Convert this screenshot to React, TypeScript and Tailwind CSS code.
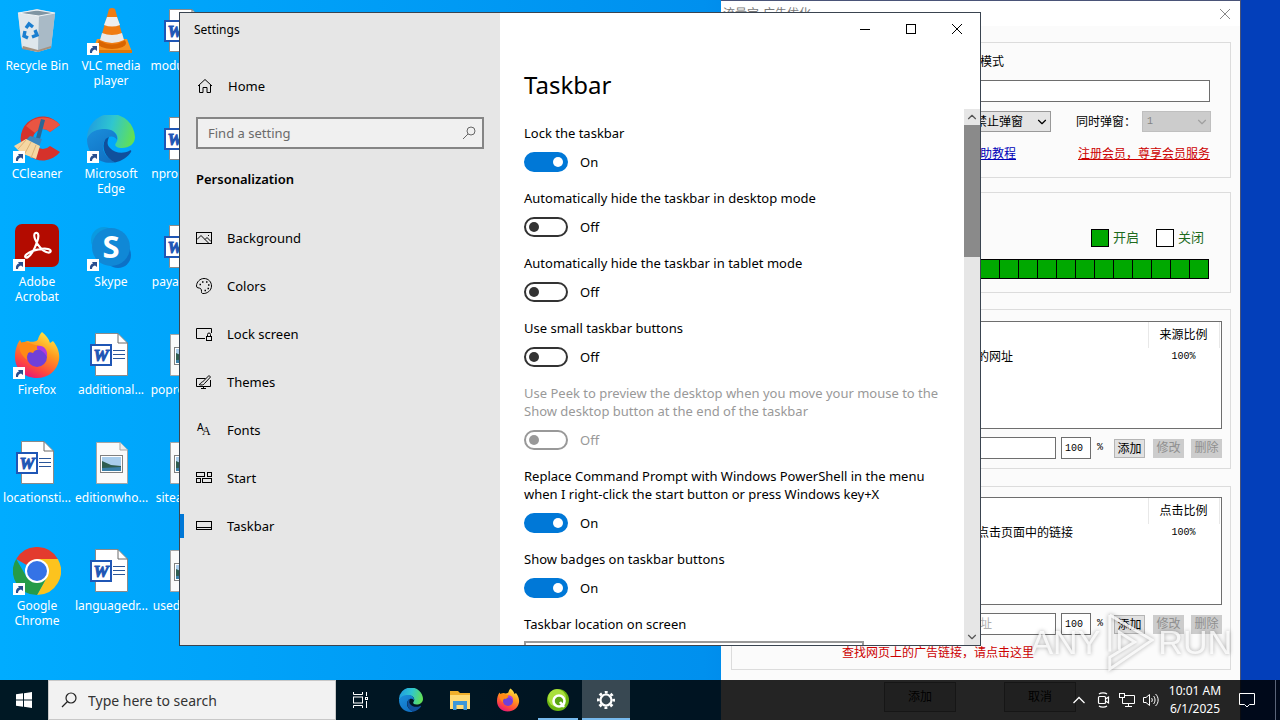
import React, { useState } from 'react';
import { ChevronDown, ChevronUp } from 'lucide-react';

/* ---------- Desktop icons ---------- */

function RecycleBinIcon() {
    return (
        <svg viewBox="0 0 48 48" className="size-12">
            <path d="M5 6 L24 2 L42 6 L38 41 L24 45 L9 41Z" fill="#c9d6df" />
            <path d="M5 6 L26 9 L25 45 L9 41Z" fill="#e3eaef" opacity=".85" />
            <path d="M26 9 L42 6 L38 41 L25 45Z" fill="#a9bac6" />
            <path d="M5 6 L24 3 L42 6 L26 9Z" fill="#7f95a3" stroke="#eef3f6" strokeWidth="1.2" />
            <path d="M10 39 L25 43 L38 39 L38 41 L25 45 L9 42Z" fill="#a4917f" />
            <g fill="none" stroke="#1b7fd0" strokeWidth="3.4">
                <path d="M13 21 L16 17 L20 20" />
                <path d="M22 23 L24 28 L19 30" />
                <path d="M15 31 L11 29 L12 24" />
            </g>
        </svg>
    );
}

function VlcIcon() {
    return (
        <svg viewBox="0 0 48 48" className="size-12">
            <path d="M10 32 L40 32 L45 45 L5 45Z" fill="#f79421" />
            <path d="M5 43 L45 43 L45 46 L5 46Z" fill="#e07708" />
            <ellipse cx="25" cy="36" rx="14" ry="6" fill="#d96500" />
            <path d="M22 2 Q25 0 28 2 L37 34 Q25 41 13 34Z" fill="#f07c12" />
            <path d="M20 10 L30 10 L33 18 Q25 21 17 18Z" fill="#eeeeee" />
            <path d="M15 26 Q25 30 35 26 L37 33 Q25 39 13 33Z" fill="#e9e9e9" />
        </svg>
    );
}

function CCleanerIcon() {
    return (
        <svg viewBox="0 0 48 48" className="size-12">
            <path d="M47 10 A22 22 0 1 0 47 37 L37 31 A10 10 0 1 1 37 17Z" fill="#d5322b" />
            <path d="M47 10 A22 22 0 0 0 13 11 L22 18 A10 10 0 0 1 37 17Z" fill="#ea5542" />
            <path d="M28 4 L32 5 L27 24 L23 23Z" fill="#2c6795" />
            <path d="M17 21 L29 24 L26 32 L13 25Z" fill="#3c86be" />
            <path d="M13 24 L27 31 L23 44 L8 38 L1 31Z" fill="#f5d7a2" />
            <path d="M13 25 L5 34 M18 27 L11 40 M23 30 L18 43" stroke="#dcb377" strokeWidth="1" />
        </svg>
    );
}

function EdgeIcon({ className = 'size-12' }: { className?: string }) {
    return (
        <svg viewBox="0 0 48 48" className={className}>
            <defs>
                <linearGradient id="edgeTop" x1="0" y1=".3" x2="1" y2=".5">
                    <stop offset="0" stopColor="#1f9be0" />
                    <stop offset=".5" stopColor="#2fc6d0" />
                    <stop offset="1" stopColor="#62e054" />
                </linearGradient>
                <linearGradient id="edgeBody" x1="0" y1="0" x2=".6" y2="1">
                    <stop offset="0" stopColor="#1b8fdc" />
                    <stop offset="1" stopColor="#1172c4" />
                </linearGradient>
            </defs>
            <path d="M0 24 A24 24 0 0 1 48 22 C48 29 42 33 35 33 C29 33 27 30 29 28 C33 22 29 15 20 15 C10 15 3 20 0 24Z" fill="url(#edgeTop)" />
            <path d="M0 24 C3 16 11 14 18 14 C26 14 31 19 30 25 C28 21 22 20 18 25 C13 32 17 42 28 47.500 C12 50 0 39 0 24Z" fill="url(#edgeBody)" />
            <path d="M18 25 C14 32 18 43 28 47.500 C35 46 41 42 44 37 C45 35 43 35 42 36 C36 39 27 38 23 33 C20 30 20 27 22 22 C20 23 19 23 18 25Z" fill="#10509c" />
        </svg>
    );
}

function AcrobatIcon() {
    return (
        <svg viewBox="0 0 48 48" className="size-12">
            <rect x="2" y="1" width="44" height="43" rx="7" fill="#b30b00" />
            <path d="M22.500 10 C26 9 26 14 24 19 C22 25 18 32 15 34 C12 36 11 33 14 31 C19 27 30 25 35 26 C39 27 38 30 35 29.500 C30 29 24 22 22 16 C21 13 21 10.500 22.500 10Z" fill="none" stroke="#fff" strokeWidth="2.200" />
        </svg>
    );
}

function SkypeIcon() {
    return (
        <svg viewBox="0 0 48 48" className="size-12">
            <circle cx="17" cy="17" r="13" fill="#0a9ae0" />
            <circle cx="31" cy="32" r="13" fill="#0c71c6" />
            <circle cx="24" cy="24" r="19" fill="#1088d6" />
            <text x="24" y="35" textAnchor="middle" fontSize="31" fontWeight="700" fontFamily="Open Sans, sans-serif" fill="#fff">S</text>
        </svg>
    );
}

function FirefoxIcon({ className = 'size-12' }: { className?: string }) {
    return (
        <svg viewBox="0 0 48 48" className={className}>
            <defs>
                <linearGradient id="foxBody" x1=".8" y1="0" x2=".3" y2="1">
                    <stop offset="0" stopColor="#fff04a" />
                    <stop offset=".4" stopColor="#ff9a1f" />
                    <stop offset=".75" stopColor="#ff4a3c" />
                    <stop offset="1" stopColor="#e6157a" />
                </linearGradient>
            </defs>
            <path d="M29 1 C33 4 36 8 37 12 L40 10 C45 16 47 23 46 29 C44 40 35 47 24 47 C11 47 2 38 2 26 C2 19 4 13 7 9 L9 13 C11 11 13 10 15 10 C20 12 25 10 25 8 C26 5 27 3 29 1Z" fill="url(#foxBody)" />
            <circle cx="24" cy="26" r="10" fill="#7040d8" />
            <path d="M7 12 C13 9 18 13 22 14 C26 14 28 16 28 17 C26 19 22 18 20 22 C16 20 13 22 14 29 C8 24 5 18 7 12Z" fill="#ff8a16" />
            <path d="M24 15 C31 14 35 19 34 26 C32 22 29 19 24 18Z" fill="#b03adf" />
        </svg>
    );
}

function ChromeIcon() {
    return (
        <svg viewBox="0 0 48 48" className="size-12">
            <path d="M24 24 L3.200 12 A24 24 0 0 1 44.800 12Z" fill="#e33b2e" />
            <path d="M24 12 L44.800 12 A24 24 0 0 1 24 48 L34 30Z" fill="#fcc31e" />
            <path d="M3.200 12 L13.600 30 L34 30 L24 48 A24 24 0 0 1 3.200 12Z" fill="#259b48" />
            <circle cx="24" cy="24" r="12" fill="#fff" />
            <circle cx="24" cy="24" r="10" fill="#3573e6" />
        </svg>
    );
}

function WordFileIcon() {
    return (
        <svg viewBox="0 0 48 48" className="size-12">
            <path d="M8.500 2.500 H31 L40.500 12 V44.500 H8.500Z" fill="#fff" stroke="#8a8a8a" />
            <path d="M31 2.500 V12 H40.500" fill="none" stroke="#6b6b6b" />
            <path d="M26 19.500 H38 M26 23.500 H38 M26 27.500 H38" stroke="#2a5699" />
            <rect x="4" y="14" width="20" height="20" fill="#fff" stroke="#1f56b5" strokeWidth="2" />
            <text x="14" y="30" textAnchor="middle" fontSize="17" fontWeight="700" fontStyle="italic" fontFamily="Liberation Serif, serif" fill="#1f56b5" stroke="#1f56b5">W</text>
        </svg>
    );
}

function ImageFileIcon() {
    return (
        <svg viewBox="0 0 48 48" className="size-12">
            <path d="M9.500 3.500 H33 L40.500 11 V44.500 H9.500Z" fill="#fafafa" stroke="#a5a5a5" />
            <path d="M33 3.500 V11 H40.500" fill="#ececec" stroke="#a5a5a5" />
            <rect x="13.500" y="16.500" width="22" height="17" fill="#fff" stroke="#808080" />
            <rect x="15" y="18" width="19" height="14" fill="#a9cdec" />
            <path d="M15 22 L24 26 L34 27 V32 H15Z" fill="#2f5d50" />
            <path d="M15 29 L34 28 V32 H15Z" fill="#3a7fa8" />
        </svg>
    );
}

function ShortcutBadge() {
    return (
        <svg viewBox="0 0 12 12" className="absolute bottom-0 left-0 size-3">
            <rect width="12" height="12" fill="#fff" />
            <path d="M3 10 C2.500 6.500 4 5 6 4.500 L5 3 H10 V8 L8 6.500 C6 7 5 8 5 10Z" fill="#2a4f8f" />
        </svg>
    );
}

interface DesktopItem {
    label: string;
    icon: React.ReactNode;
    shortcut?: boolean;
}

const columns: DesktopItem[][] = [
    [
        { label: 'Recycle Bin', icon: <RecycleBinIcon /> },
        { label: 'CCleaner', icon: <CCleanerIcon />, shortcut: true },
        { label: 'Adobe Acrobat', icon: <AcrobatIcon />, shortcut: true },
        { label: 'Firefox', icon: <FirefoxIcon />, shortcut: true },
        { label: 'locationsti...', icon: <WordFileIcon /> },
        { label: 'Google Chrome', icon: <ChromeIcon />, shortcut: true },
    ],
    [
        { label: 'VLC media player', icon: <VlcIcon />, shortcut: true },
        { label: 'Microsoft Edge', icon: <EdgeIcon />, shortcut: true },
        { label: 'Skype', icon: <SkypeIcon />, shortcut: true },
        { label: 'additional...', icon: <WordFileIcon /> },
        { label: 'editionwho...', icon: <ImageFileIcon /> },
        { label: 'languagedr...', icon: <WordFileIcon /> },
    ],
    [
        { label: 'modulesin...', icon: <WordFileIcon /> },
        { label: 'npronglist...', icon: <WordFileIcon /> },
        { label: 'payaccess...', icon: <WordFileIcon /> },
        { label: 'poproduct...', icon: <ImageFileIcon /> },
        { label: 'siteaddit...', icon: <ImageFileIcon /> },
        { label: 'usedisted...', icon: <ImageFileIcon /> },
    ],
];

function DesktopIcons() {
    return (
        <div className="flex">
            {columns.map((items, c) => (
                <div key={c} className="flex w-[74px] flex-col">
                    {items.map((item) => (
                        <div key={item.label} className="flex h-[108px] flex-col items-center pt-[7px]">
                            <div className="relative">
                                {item.icon}
                                {item.shortcut && <ShortcutBadge />}
                            </div>
                            <span className="mt-[3px] w-[72px] text-center text-[12px] leading-[15px] text-white">{item.label}</span>
                        </div>
                    ))}
                </div>
            ))}
        </div>
    );
}

/* ---------- Ad window ---------- */

function SourceList({ header, row, placeholder, id }: { header: string; row: string; placeholder?: string; id: string }) {
    return (
        <>
            <div className="h-[108px] border border-[#6e6e6e] bg-white">
                <table className="w-full table-fixed border-collapse">
                    <thead>
                        <tr className="h-[26px]">
                            <th className="w-auto" />
                            <th className="w-[71px] border-x border-[#e8e8e8] font-normal">{header}</th>
                            <th className="w-[2px]" />
                        </tr>
                    </thead>
                    <tbody>
                        <tr>
                            <td className="pl-[235px]">{row}</td>
                            <td className="text-center font-['Liberation_Mono',monospace] text-[10px]">100%</td>
                            <td />
                        </tr>
                    </tbody>
                </table>
            </div>
            <div className="mt-2 flex items-center">
                <input aria-label={`${id} url`} placeholder={placeholder} className="h-[22px] min-w-0 flex-1 border border-[#6e6e6e] bg-white pl-[226px] placeholder:text-[#b0b0b0]" />
                <input aria-label={`${id} ratio`} defaultValue="100" className="ml-[5px] h-[22px] w-[30px] border border-[#6e6e6e] bg-white pl-[3px] font-['Liberation_Mono',monospace] text-[10px]" />
                <span className="ml-[6px] w-[17px] font-['Liberation_Mono',monospace] text-[10px]">%</span>
                <button className="h-[19px] w-[31px] border border-[#b5b5b5] bg-[#e1e1e1]">添加</button>
                <button disabled className="ml-2 h-[19px] w-[31px] bg-[#cccccc] text-[#8f8f8f]">修改</button>
                <button disabled className="ml-[7px] h-[19px] w-[31px] bg-[#cccccc] text-[#8f8f8f]">删除</button>
            </div>
        </>
    );
}

function AdWindow() {
    return (
        <section className="absolute top-0 left-[721px] flex h-full w-[520px] flex-col border-t border-r border-[#4a5478] bg-[#fbfbfb] font-['Liberation_Sans','Noto_Sans_CJK_SC',sans-serif] text-[12px] leading-[18px] text-black">
            <header className="flex h-[25px] shrink-0 items-center justify-between bg-white pr-[9px] pl-[2px] text-[#777777]">
                <span>流量宝-广告优化</span>
                <button aria-label="关闭窗口">
                    <svg viewBox="0 0 12 12" className="size-3" fill="none" stroke="#888888"><path d="M1 1 L11 11 M11 1 L1 11" /></svg>
                </button>
            </header>

            <div className="mr-[9px] ml-[10px] mt-4 flex h-[136px] shrink-0 flex-col border border-[#dcdcdc] pt-[10px] pr-5 pl-5">
                <div className="pl-[228px]">模式</div>
                <input aria-label="网址" className="mt-[9px] h-[22px] w-full border border-[#6e6e6e] bg-white" />
                <div className="mt-[9px] -mr-px flex items-center justify-end">
                    <span className="relative flex">
                        <select aria-label="弹窗" className="h-[21px] w-[100px] appearance-none border border-[#999999] bg-[#e4e4e4] pl-[23px]">
                            <option>禁止弹窗</option>
                        </select>
                        <ChevronDown className="pointer-events-none absolute top-1 right-[2px] size-[14px]" strokeWidth={2} />
                    </span>
                    <label htmlFor="popups" className="ml-[25px] w-[66px]">同时弹窗：</label>
                    <span className="relative flex">
                        <select id="popups" disabled className="h-[21px] w-[69px] appearance-none border border-[#bfbfbf] bg-[#cccccc] pl-1 font-['Liberation_Mono',monospace] text-[10px] text-[#838383] opacity-100">
                            <option>1</option>
                        </select>
                        <ChevronDown className="pointer-events-none absolute top-1 right-[2px] size-[14px] text-[#a0a0a0]" strokeWidth={2} />
                    </span>
                </div>
                <div className="mt-[13px] flex justify-between">
                    <a href="#help" className="pl-[216px] text-[#0000b8] underline">帮助教程</a>
                    <a href="#vip" className="text-[#cc0000] underline">注册会员，尊享会员服务</a>
                </div>
            </div>

            <div className="mr-[9px] ml-[10px] mt-[14px] flex h-[101px] shrink-0 flex-col border border-[#dcdcdc] pt-9 pr-[21px] pl-5">
                <div className="flex items-center justify-end pr-[5px] text-[13px] text-[#1e6b1e]">
                    <span className="mr-1 size-[18px] border border-black bg-[#00a800]" />
                    <span>开启</span>
                    <span className="mr-1 ml-[17px] size-[18px] border border-black bg-white" />
                    <span>关闭</span>
                </div>
                <div className="mt-3 flex h-5 justify-end border-r border-black">
                    {Array.from({ length: 24 }, (_, hour) => (
                        <span key={hour} className="w-[19px] border-y border-l border-black bg-[#00a800]" />
                    ))}
                </div>
            </div>

            <div className="mr-[9px] ml-[10px] mt-4 h-[160px] shrink-0 border border-[#dcdcdc] pr-2 pl-[9px] pt-[11px]">
                <SourceList id="source" header="来源比例" row="的网址" />
            </div>

            <div className="mr-[9px] ml-[10px] mt-[17px] h-[184px] shrink-0 border border-[#dcdcdc] pr-2 pl-[9px] pt-[10px]">
                <SourceList id="click" header="点击比例" row="点击页面中的链接" placeholder="网址" />
                <a href="#find" className="mt-[9px] block pl-[101px] text-[#cc0000]">查找网页上的广告链接，请点击这里</a>
            </div>

            <div className="mt-3 flex shrink-0 gap-12 pl-[163px]">
                <button className="h-[30px] w-[72px] border border-[#999999] bg-[#e1e1e1]">添加</button>
                <button className="h-[30px] w-[72px] border border-[#999999] bg-[#e1e1e1]">取消</button>
            </div>
        </section>
    );
}

/* ---------- Settings window ---------- */

const navItems = [
    {
        label: 'Background',
        icon: <><rect x=".5" y="2.500" width="15" height="11" /><path d="M1 9.500 L5 5.500 L12.500 13 M9 9.500 L11 7.500 L15 11.500" /><path d="M12 5.500 h1" /></>,
    },
    {
        label: 'Colors',
        icon: <><path d="M6.500 15.500 C4.500 15 6.500 12 4.500 10.500 C3 9.500 .5 10.500 .5 8 C.5 4 4 .5 8 .5 C12.500 .5 15.500 4 15.500 8 C15.500 12.500 11 16 6.500 15.500Z" /><path d="M3.500 6.500 h1.500 M6 4 h1.500 M10 4 h1.500 M12 7 h1.500 M11.500 10.500 h1.500 M8.500 12.500 h1.500" strokeWidth="1.500" /></>,
    },
    {
        label: 'Lock screen',
        icon: <><path d="M9 12.500 H.5 V2.500 H15.500 V7" /><rect x="10.500" y="10.500" width="5" height="4" /><path d="M11.500 10.500 V8.500 a1.500 1.500 0 0 1 3 0 V10.500" /></>,
    },
    {
        label: 'Themes',
        icon: <><path d="M9.500 4.500 H.5 V12.500 H14.500 V6 M5 14.500 H10 M7.500 12.500 V14.500" /><path d="M3 10.500 C5 10.500 4.500 8 6.500 8 L13 1.500 L14.500 3 L8.500 9.500 C8 11 5 11.500 3 10.500Z" /></>,
    },
    {
        label: 'Fonts',
        icon: (
            <g fill="#000" stroke="none">
                <text x="1" y="9" fontSize="10" fontFamily="Liberation Sans, sans-serif">A</text>
                <text x="6" y="13" fontSize="12" fontFamily="Liberation Serif, serif">A</text>
            </g>
        ),
    },
    {
        label: 'Start',
        icon: <><rect x=".5" y="2.500" width="8" height="4" /><rect x="11.500" y="2.500" width="4" height="4" /><rect x=".5" y="8.500" width="4" height="4" /><rect x="6.500" y="8.500" width="9" height="4" /></>,
    },
    {
        label: 'Taskbar',
        icon: <><rect x=".5" y="3.500" width="15" height="8" /><path d="M1 9.500 H15" /></>,
    },
];

interface Setting {
    label: string;
    on: boolean;
    disabled?: boolean;
}

const settings: Setting[] = [
    { label: 'Lock the taskbar', on: true },
    { label: 'Automatically hide the taskbar in desktop mode', on: false },
    { label: 'Automatically hide the taskbar in tablet mode', on: false },
    { label: 'Use small taskbar buttons', on: false },
    { label: 'Use Peek to preview the desktop when you move your mouse to the Show desktop button at the end of the taskbar', on: false, disabled: true },
    { label: 'Replace Command Prompt with Windows PowerShell in the menu when I right-click the start button or press Windows key+X', on: true },
    { label: 'Show badges on taskbar buttons', on: true },
];

function Toggle({ label, on, disabled }: Setting) {
    const [checked, setChecked] = useState(on);

    return (
        <label className={disabled ? 'mb-[17px] block text-[#999999]' : 'mb-[17px] block'}>
            <span className="block">{label}</span>
            <span className="mt-[10px] flex h-5 items-center gap-3">
                <input
                    type="checkbox"
                    role="switch"
                    checked={checked}
                    disabled={disabled}
                    onChange={(e) => setChecked(e.target.checked)}
                    className="flex h-5 w-11 appearance-none items-center rounded-full border-2 border-[#333333] pl-[3px] before:size-[10px] before:rounded-full before:bg-[#333333] checked:border-[#0078d7] checked:bg-[#0078d7] checked:before:translate-x-6 checked:before:bg-white disabled:border-[#999999] disabled:before:bg-[#999999]"
                />
                <span>{checked ? 'On' : 'Off'}</span>
            </span>
        </label>
    );
}

function SettingsWindow() {
    return (
        <section className="absolute top-3 left-[179px] flex h-[634px] w-[802px] border border-[#3a4450] bg-white text-[13px] leading-[18px] text-black">
            {/* Sidebar */}
            <aside className="flex w-[320px] shrink-0 flex-col bg-[#e6e6e6]">
                <div className="px-[14px] pt-2 text-[12px]">Settings</div>
                <a href="#home" className="mt-[29px] flex h-9 items-center gap-[15px] px-[17px]">
                    <svg viewBox="0 0 16 16" className="size-4" fill="none" stroke="#000"><path d="M1 8 L8 1.500 L15 8 M2.500 7 V14.500 H6 V9.500 H10 V14.500 H13.500 V7" /></svg>
                    Home
                </a>
                <div className="mx-4 mt-[13px] flex h-8 items-center border-2 border-[#858585] bg-[#f0f0f0] px-[10px]">
                    <input aria-label="Find a setting" placeholder="Find a setting" className="min-w-0 flex-1 bg-transparent outline-none placeholder:text-[#6a6a6a]" />
                    <svg viewBox="0 0 14 14" className="-mr-1 size-[14px]" fill="none" stroke="#666"><circle cx="9" cy="5" r="4" /><path d="M6 8 L1 13" /></svg>
                </div>
                <h2 className="mt-[21px] px-4 font-semibold">Personalization</h2>
                <nav className="mt-[26px] flex flex-col">
                    {navItems.map((item) => (
                        <a key={item.label} href={`#${item.label}`} className="flex h-12 items-center">
                            <span className={item.label === 'Taskbar' ? 'h-6 w-1 bg-[#0078d7]' : 'h-6 w-1'} />
                            <svg viewBox="0 0 16 16" className="mr-[15px] ml-3 size-4" fill="none" stroke="#000">{item.icon}</svg>
                            {item.label}
                        </a>
                    ))}
                </nav>
            </aside>

            {/* Content */}
            <div className="flex min-w-0 flex-1 flex-col">
                <div className="flex h-8 shrink-0 justify-end">
                    <button aria-label="Minimize" className="flex w-[46px] items-center justify-center">
                        <svg viewBox="0 0 10 10" className="size-[10px]" stroke="#000"><path d="M0 5.500 H10" /></svg>
                    </button>
                    <button aria-label="Maximize" className="flex w-[46px] items-center justify-center">
                        <svg viewBox="0 0 10 10" className="size-[10px]" fill="none" stroke="#000"><rect x=".5" y=".5" width="9" height="9" /></svg>
                    </button>
                    <button aria-label="Close" className="flex w-[46px] items-center justify-center">
                        <svg viewBox="0 0 10 10" className="size-[10px]" stroke="#000"><path d="M0 0 L10 10 M10 0 L0 10" /></svg>
                    </button>
                </div>
                <h1 className="h-16 shrink-0 px-6 pt-[22px] text-[24px] leading-9">Taskbar</h1>
                <div className="flex min-h-0 flex-1">
                    <div className="flex-1 overflow-hidden pt-[15px] pr-3 pl-6">
                        {settings.map((s) => <Toggle key={s.label} {...s} />)}
                        <label htmlFor="location" className="block">Taskbar location on screen</label>
                        <select id="location" className="mt-2 block h-8 w-[340px] appearance-none border-2 border-[#999999] px-2">
                            <option>Bottom</option>
                        </select>
                    </div>
                    <div className="flex w-4 shrink-0 flex-col items-center bg-[#e6e6e6]">
                        <ChevronUp className="my-[1px] size-[14px] shrink-0 text-[#555555]" strokeWidth={2} />
                        <span className="h-[132px] w-full bg-[#8a8a8a]" />
                        <ChevronDown className="mt-auto mb-[1px] size-[14px] text-[#555555]" strokeWidth={2} />
                    </div>
                </div>
            </div>
        </section>
    );
}

/* ---------- Taskbar ---------- */

function Taskbar() {
    return (
        <footer className="absolute inset-x-0 bottom-0 flex h-10 bg-black/86 text-white">
            <button aria-label="Start" className="flex w-12 items-center justify-center">
                <svg viewBox="0 0 16 16" className="size-4" fill="#fff"><path d="M0 2.300 L7 1.300 V7.500 H0Z M8 1.200 L16 0 V7.500 H8Z M0 8.500 H7 V14.700 L0 13.700Z M8 8.500 H16 V16 L8 14.800Z" /></svg>
            </button>
            <div className="flex w-[288px] items-center gap-[11px] border border-[#c8c8c8] bg-[#f2f2f2] px-3">
                <svg viewBox="0 0 16 16" className="size-4" fill="none" stroke="#222" strokeWidth="1.200"><circle cx="10" cy="6" r="5" /><path d="M6.500 9.500 L1 15" /></svg>
                <input aria-label="Search" placeholder="Type here to search" className="min-w-0 flex-1 bg-transparent text-[14px] outline-none placeholder:text-[#333333]" />
            </div>
            <button aria-label="Task view" className="flex w-12 items-center justify-center">
                <svg viewBox="0 0 16 16" className="size-4" fill="none" stroke="#fff"><path d="M1.500 0 V2.500 H10.500 V0 M1.500 16 V13.500 H10.500 V16 M14.500 0 V4 M14.500 9 V16" /><rect x="1.500" y="5" width="9" height="6" /><rect x="13.500" y="5.500" width="2" height="2" /></svg>
            </button>
            <button aria-label="Edge" className="flex w-[54px] items-center justify-center"><EdgeIcon className="size-6" /></button>
            <button aria-label="File Explorer" className="flex w-11 items-center justify-center">
                <svg viewBox="0 0 24 24" className="size-6">
                    <path d="M2 3 H10 L12 5 H22 V21 H2Z" fill="#f0b02c" />
                    <rect x="2" y="7" width="20" height="14" fill="#ffdb76" />
                    <path d="M5 13 H19 V22 H15.500 V17 H8.500 V22 H5Z" fill="#3b97d9" />
                </svg>
            </button>
            <button aria-label="Firefox" className="flex w-[52px] items-center justify-center"><FirefoxIcon className="size-6" /></button>
            <button aria-label="Traffic" className="flex w-12 flex-col items-center justify-end">
                <svg viewBox="0 0 24 24" className="mb-[6px] size-6">
                    <circle cx="12" cy="12" r="11" fill="#6cb512" />
                    <circle cx="11" cy="10" r="9" fill="#a9e03c" />
                    <circle cx="13" cy="13" r="5.500" fill="#5aa512" stroke="#fff" strokeWidth="2.600" />
                    <path d="M14 14 L18 19" stroke="#fff" strokeWidth="2.600" />
                </svg>
                <span className="h-[2px] w-10 bg-[#76b9ed]" />
            </button>
            <button aria-label="Settings" className="flex w-12 flex-col items-center justify-end bg-white/22">
                <svg viewBox="0 0 20 20" className="mb-2 size-5" fill="none" stroke="#fff">
                    <circle cx="10" cy="10" r="5.500" strokeWidth="2.200" />
                    <circle cx="10" cy="10" r="7.700" strokeWidth="2.600" strokeDasharray="2.900 3.148" strokeDashoffset="1.450" />
                </svg>
                <span className="h-[2px] w-full bg-[#76b9ed]" />
            </button>

            {/* System tray */}
            <div className="ml-auto flex items-center">
                <button aria-label="Show hidden icons" className="flex w-6 justify-center">
                    <svg viewBox="0 0 12 12" className="size-3" fill="none" stroke="#fff" strokeWidth="1.300"><path d="M.5 9 L6 3.500 L11.500 9" /></svg>
                </button>
                <button aria-label="Meet now" className="flex w-6 justify-center">
                    <svg viewBox="0 0 16 16" className="size-4" fill="none" stroke="#fff" strokeWidth="1.200"><rect x="3.500" y="4.500" width="7" height="7" rx="1" /><path d="M10.500 7 L13.500 5 V11 L10.500 9 M4 2 C6 .5 10 .5 12 2 M4 14 C6 15.500 10 15.500 12 14" /></svg>
                </button>
                <button aria-label="Network" className="flex w-6 justify-center">
                    <svg viewBox="0 0 16 16" className="size-4" fill="none" stroke="#fff"><path d="M5.500 3.500 H15.500 V11.500 H3.500 V6 M9.500 11.500 V14.500 M6 14.500 H13" /><rect x=".5" y="1.500" width="5" height="4" /></svg>
                </button>
                <button aria-label="Volume" className="flex w-6 justify-center">
                    <svg viewBox="0 0 16 16" className="size-4" fill="none" stroke="#fff"><path d="M.5 5.500 H3 L6.500 2.500 V13.500 L3 10.500 H.5Z M8.500 6 C9.500 7 9.500 9 8.500 10 M10.500 4 C12.500 6 12.500 10 10.500 12 M12.500 2 C16 5 16 11 12.500 14" /></svg>
                </button>
                <div className="w-16 text-center text-[12px] leading-[18px]">
                    <div>10:01 AM</div>
                    <div>6/1/2025</div>
                </div>
                <button aria-label="Notifications" className="flex w-10 justify-center">
                    <svg viewBox="0 0 16 16" className="size-4" fill="none" stroke="#fff"><path d="M.5 1.500 H15.500 V12.500 H10.500 L8 15 L5.500 12.500 H.5Z" /></svg>
                </button>
                <span className="ml-2 h-10 w-[5px] border-l border-[#5a6478]" />
            </div>
        </footer>
    );
}

function Watermark() {
    return (
        <div className="pointer-events-none absolute right-12 bottom-[46px] flex items-center gap-1 font-['Liberation_Sans',sans-serif] text-[34px] leading-[64px] text-white/80 drop-shadow-[0_0_2px_rgba(0,0,0,0.4)]">
            <span>ANY</span>
            <svg viewBox="0 0 52 64" className="h-16 w-[50px]" fill="none" stroke="#fff" strokeWidth="3" opacity=".8">
                <path d="M6 4 L50 30 L6 60 V48 L32 32 L16 22 V40 M6 4 V42" />
            </svg>
            <span>RUN</span>
        </div>
    );
}

export default function App() {
    return (
        <main className="relative h-screen w-full overflow-hidden bg-linear-to-r from-[#00acff] via-[#0090ee] via-55% to-[#033fba] to-97% font-['Noto_Sans',sans-serif]">
            <DesktopIcons />
            <AdWindow />
            <SettingsWindow />
            <Taskbar />
            <Watermark />
        </main>
    );
}
